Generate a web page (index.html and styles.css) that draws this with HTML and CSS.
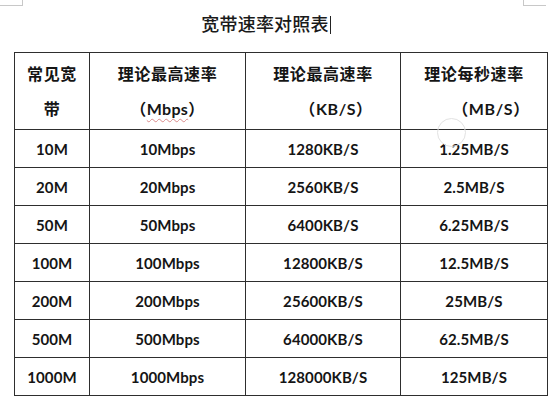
FILE: index.html
```html
<!DOCTYPE html>
<html lang="zh-CN">
<head>
<meta charset="utf-8">
<link rel="stylesheet" href="styles.css">
</head>
<body>
<div class="page">
  <span class="mark mark-tl"></span>
  <span class="mark mark-tr"></span>
  <span class="ring"></span>
  <h1 class="title">宽带速率对照表<span class="caret"></span></h1>
  <table class="rates">
    <colgroup>
      <col class="c1"><col class="c2"><col class="c3"><col class="c4">
    </colgroup>
    <thead>
      <tr>
        <th>常见宽<br>带</th>
        <th>理论最高速率<br>（<span class="spell">Mbps</span>）</th>
        <th>理论最高速率<br><span class="unit u3">（KB/S）</span></th>
        <th>理论每秒速率<br><span class="unit u4">（MB/S）</span></th>
      </tr>
    </thead>
    <tbody>
      <tr><td>10M</td><td>10Mbps</td><td>1280KB/S</td><td>1.25MB/S</td></tr>
      <tr><td>20M</td><td>20Mbps</td><td>2560KB/S</td><td>2.5MB/S</td></tr>
      <tr><td>50M</td><td>50Mbps</td><td>6400KB/S</td><td>6.25MB/S</td></tr>
      <tr><td>100M</td><td>100Mbps</td><td>12800KB/S</td><td>12.5MB/S</td></tr>
      <tr><td>200M</td><td>200Mbps</td><td>25600KB/S</td><td>25MB/S</td></tr>
      <tr><td>500M</td><td>500Mbps</td><td>64000KB/S</td><td>62.5MB/S</td></tr>
      <tr><td>1000M</td><td>1000Mbps</td><td>128000KB/S</td><td>125MB/S</td></tr>
    </tbody>
  </table>
</div>
</body>
</html>
```

FILE: styles.css
```css
html, body {
  margin: 0;
  padding: 0;
  background: #fff;
}

.page {
  position: relative;
  width: 560px;
  height: 400px;
  overflow: hidden;
  color: #151515;
  font-family: Lato, "Noto Sans CJK SC", sans-serif;
}

.mark {
  position: absolute;
  top: 0;
  width: 22px;
  height: 5px;
  border-bottom: 1px solid #c8c8c8;
}
.mark-tl {
  left: 0;
  border-right: 1px solid #c8c8c8;
}
.mark-tr {
  left: 523px;
  border-left: 1px solid #c8c8c8;
}

.ring {
  position: absolute;
  left: 437px;
  top: 118px;
  width: 27px;
  height: 27px;
  border: 1px solid #e2e2e2;
  border-radius: 50%;
}

.title {
  margin: 0;
  padding: 11px 28px 17px 0;
  height: 24px;
  line-height: 24px;
  text-align: center;
  font-family: "Noto Sans CJK SC", sans-serif;
  font-size: 18px;
  font-weight: 500;
  letter-spacing: 0.2px;
  color: #1a1a1a;
}

.caret {
  display: inline-block;
  width: 0;
  height: 18px;
  border-left: 1px solid #222;
  vertical-align: -3px;
  margin-left: 1px;
}

.rates {
  margin-left: 14px;
  width: 533px;
  border-collapse: collapse;
  table-layout: fixed;
}

.c1 { width: 75px; }
.c2 { width: 156px; }
.c3 { width: 155px; }
.c4 { width: 147px; }

.rates th,
.rates td {
  border: 1.5px solid #2e2e2e;
  padding: 0;
  text-align: center;
  vertical-align: middle;
}

.rates th {
  height: 76px;
  font-family: Lato, "Noto Sans CJK SC", sans-serif;
  font-size: 16px;
  font-weight: 700;
  line-height: 35px;
  letter-spacing: 0.6px;
}

.rates td {
  height: 37px;
  font-size: 15px;
  font-weight: 700;
  letter-spacing: 0.1px;
}

.unit {
  display: inline-block;
}
.u3 { padding-left: 26px; }
.u4 { padding-left: 34px; }

.spell {
  letter-spacing: 0.3px;
  text-decoration: underline wavy #d98a8a;
  text-decoration-thickness: 1px;
  text-underline-offset: 3px;
}
```
